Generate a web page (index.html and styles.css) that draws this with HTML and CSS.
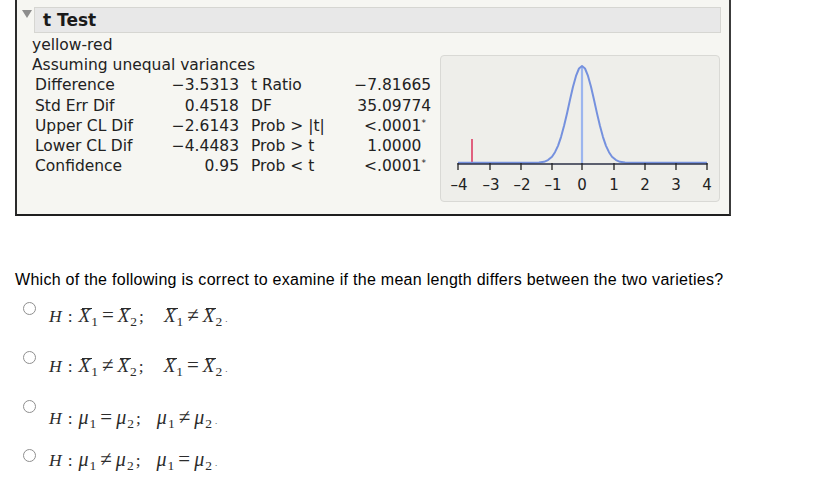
FILE: index.html
```html
<!DOCTYPE html>
<html>
<head>
<meta charset="utf-8">
<link rel="stylesheet" href="styles.css">
</head>
<body>
<div class="panel">
  <div class="hdr-row">
    <span class="tri"></span>
    <div class="hdr">t Test</div>
  </div>
  <div class="content">
    <div class="left">
      <div class="line">yellow-red</div>
      <div class="line">Assuming unequal variances</div>
      <div class="stats">
        <span>Difference</span><span class="v">−3.5313</span><span class="l2">t Ratio</span><span class="i">−7</span><span class="f">.81665</span>
        <span>Std Err Dif</span><span class="v">0.4518</span><span class="l2">DF</span><span class="i">35</span><span class="f">.09774</span>
        <span>Upper CL Dif</span><span class="v">−2.6143</span><span class="l2">Prob &gt; |t|</span><span class="i">&lt;</span><span class="f">.0001<sup class="star">*</sup></span>
        <span>Lower CL Dif</span><span class="v">−4.4483</span><span class="l2">Prob &gt; t</span><span class="i">1</span><span class="f">.0000</span>
        <span>Confidence</span><span class="v">0.95</span><span class="l2">Prob &lt; t</span><span class="i">&lt;</span><span class="f">.0001<sup class="star">*</sup></span>
      </div>
    </div>
    <div class="chart">
      <svg width="278" height="145" viewBox="0 0 278 145">
        <line x1="31" y1="83" x2="31" y2="107" stroke="#e0607e" stroke-width="2"/>
        <line x1="141" y1="11" x2="141" y2="107" stroke="#9cb5ee" stroke-width="2.2"/>
        <polyline fill="none" stroke="#7591de" stroke-width="2" stroke-linejoin="round"
          points="17,106.8 91,106.8 98,106.5 103,105.8 107,104.1 111,100.7 114,96.2 117,89.8 120,81.1 123,70.1 126,57.4 129,43.8 132,30.8 135,19.9 138,12.5 141,10 144,12.5 147,19.9 150,30.8 153,43.8 156,57.4 159,70.1 162,81.1 165,89.8 168,96.2 171,100.7 175,104.1 179,105.8 184,106.5 191,106.8 266,106.8"/>
        <line x1="16.5" y1="108" x2="266.5" y2="108" stroke="#2a2f44" stroke-width="1.6"/>
        <g stroke="#222" stroke-width="1.3">
          <line x1="17" y1="107" x2="17" y2="114"/>
          <line x1="49" y1="107" x2="49" y2="114"/>
          <line x1="80" y1="107" x2="80" y2="114"/>
          <line x1="111" y1="107" x2="111" y2="114"/>
          <line x1="141" y1="107" x2="141" y2="114"/>
          <line x1="173" y1="107" x2="173" y2="114"/>
          <line x1="204" y1="107" x2="204" y2="114"/>
          <line x1="235" y1="107" x2="235" y2="114"/>
          <line x1="266" y1="107" x2="266" y2="114"/>
        </g>
        <g class="ax" text-anchor="middle">
          <text x="18" y="134">–4</text>
          <text x="50" y="134">–3</text>
          <text x="81" y="134">–2</text>
          <text x="112" y="134">–1</text>
          <text x="141" y="134">0</text>
          <text x="173" y="134">1</text>
          <text x="204" y="134">2</text>
          <text x="235" y="134">3</text>
          <text x="266" y="134">4</text>
        </g>
      </svg>
    </div>
  </div>
</div>

<div class="q">Which of the following is correct to examine if the mean length differs between the two varieties?</div>

<div class="opts">
  <div class="opt o1">
    <span class="radio"></span>
    <span class="fm"><i>H</i><span class="c">:</span><span class="xb"><i>X</i></span><sub>1</sub><span class="op">=</span><span class="xb"><i>X</i></span><sub>2</sub><span class="semi">;</span><span class="sp"></span><span class="xb"><i>X</i></span><sub>1</sub><span class="op">≠</span><span class="xb"><i>X</i></span><sub>2</sub><span class="dot">.</span></span>
  </div>
  <div class="opt o2">
    <span class="radio"></span>
    <span class="fm"><i>H</i><span class="c">:</span><span class="xb"><i>X</i></span><sub>1</sub><span class="op">≠</span><span class="xb"><i>X</i></span><sub>2</sub><span class="semi">;</span><span class="sp"></span><span class="xb"><i>X</i></span><sub>1</sub><span class="op">=</span><span class="xb"><i>X</i></span><sub>2</sub><span class="dot">.</span></span>
  </div>
  <div class="opt o3">
    <span class="radio"></span>
    <span class="fm"><i>H</i><span class="c">:</span><i class="mu">μ</i><sub>1</sub><span class="op">=</span><i class="mu">μ</i><sub>2</sub><span class="semi">;</span><span class="sp mus"></span><i class="mu">μ</i><sub>1</sub><span class="op">≠</span><i class="mu">μ</i><sub>2</sub><span class="dot">.</span></span>
  </div>
  <div class="opt o4">
    <span class="radio"></span>
    <span class="fm"><i>H</i><span class="c">:</span><i class="mu">μ</i><sub>1</sub><span class="op">≠</span><i class="mu">μ</i><sub>2</sub><span class="semi">;</span><span class="sp mus"></span><i class="mu">μ</i><sub>1</sub><span class="op">=</span><i class="mu">μ</i><sub>2</sub><span class="dot">.</span></span>
  </div>
</div>
</body>
</html>
```

FILE: styles.css
```css
body {
  margin: 0;
  background: #fff;
}

.panel {
  box-sizing: border-box;
  margin-left: 15px;
  width: 716px;
  height: 216px;
  padding-top: 7px;
  background: #f6f6f2;
  border-left: 2px solid #2b2b2b;
  border-right: 2px solid #3c3c3c;
  border-bottom: 2px solid #1f1f1f;
  font-family: "DejaVu Sans", sans-serif;
  color: #222;
}

.hdr-row {
  display: flex;
  align-items: flex-start;
}

.tri {
  width: 0;
  height: 0;
  margin: 3px 0 0 5px;
  border-left: 5px solid transparent;
  border-right: 5px solid transparent;
  border-top: 8px solid #8d8d8d;
}

.hdr {
  box-sizing: border-box;
  margin-left: 2px;
  width: 687px;
  height: 26px;
  padding-left: 8px;
  border: 1px solid #d6d6d2;
  background: #e8e8e8;
  font-weight: bold;
  font-size: 17px;
  line-height: 24px;
  color: #1a1a1a;
}

.content {
  display: flex;
  margin: 2px 0 0 15px;
  width: 689px;
}

.left {
  width: 408px;
  font-size: 15.5px;
  line-height: 20.2px;
}

.stats {
  display: grid;
  grid-template-columns: 110px 94px 90px 48px auto;
  margin-left: 3px;
}

.v,
.i {
  text-align: right;
}

.l2 {
  padding-left: 12px;
}

.star {
  font-size: 9px;
  vertical-align: 5px;
  line-height: 0;
}

.chart {
  box-sizing: border-box;
  width: 280px;
  height: 147px;
  margin-top: 20px;
  border: 1px solid #d9d9d5;
  border-radius: 4px;
  background: #eeeeea;
}

.chart svg {
  display: block;
}

.ax {
  font-family: "DejaVu Sans", sans-serif;
  font-size: 15px;
  fill: #222;
}

.q {
  margin: 55.2px 0 0 15px;
  font-family: "Liberation Sans", Arial, sans-serif;
  font-size: 16px;
  letter-spacing: 0.28px;
  line-height: 18px;
  color: #000;
  white-space: nowrap;
}

.opts {
  padding-left: 22.5px;
}

.opt {
  display: flex;
  align-items: flex-start;
  height: 48.7px;
}

.radio {
  flex: none;
  box-sizing: border-box;
  width: 13px;
  height: 13px;
  margin-top: 13.3px;
  border: 1px solid #8f8f8f;
  border-radius: 50%;
  background: #fff;
}

.fm {
  margin-left: 13.5px;
  padding-top: 16.5px;
  font-family: "Liberation Serif", "Times New Roman", serif;
  font-size: 17.5px;
  line-height: 20px;
  color: #2c2c2c;
  white-space: nowrap;
}

.o2 .fm { padding-top: 17.8px; }
.o3 .fm { padding-top: 21.1px; }
.o4 .fm { padding-top: 14.4px; }

.fm sub {
  font-size: 13.5px;
  vertical-align: -4px;
  line-height: 0;
  margin-left: 1px;
}

.c {
  margin: 0 6px;
}

.op {
  font-size: 21px;
  line-height: 0;
  margin: 0 4px;
}

.semi {
  margin-left: 2px;
}

.sp {
  display: inline-block;
  width: 20px;
}

.sp.mus {
  width: 16px;
}

.dot {
  font-size: 9px;
  margin-left: 3px;
}

.xb {
  position: relative;
  display: inline-block;
  font-size: 19px;
  line-height: 1;
}

.xb::before {
  content: "";
  position: absolute;
  left: 3px;
  right: -2px;
  top: 2px;
  border-top: 1px solid #2c2c2c;
}

.mu {
  font-size: 20px;
  line-height: 0;
}
```
